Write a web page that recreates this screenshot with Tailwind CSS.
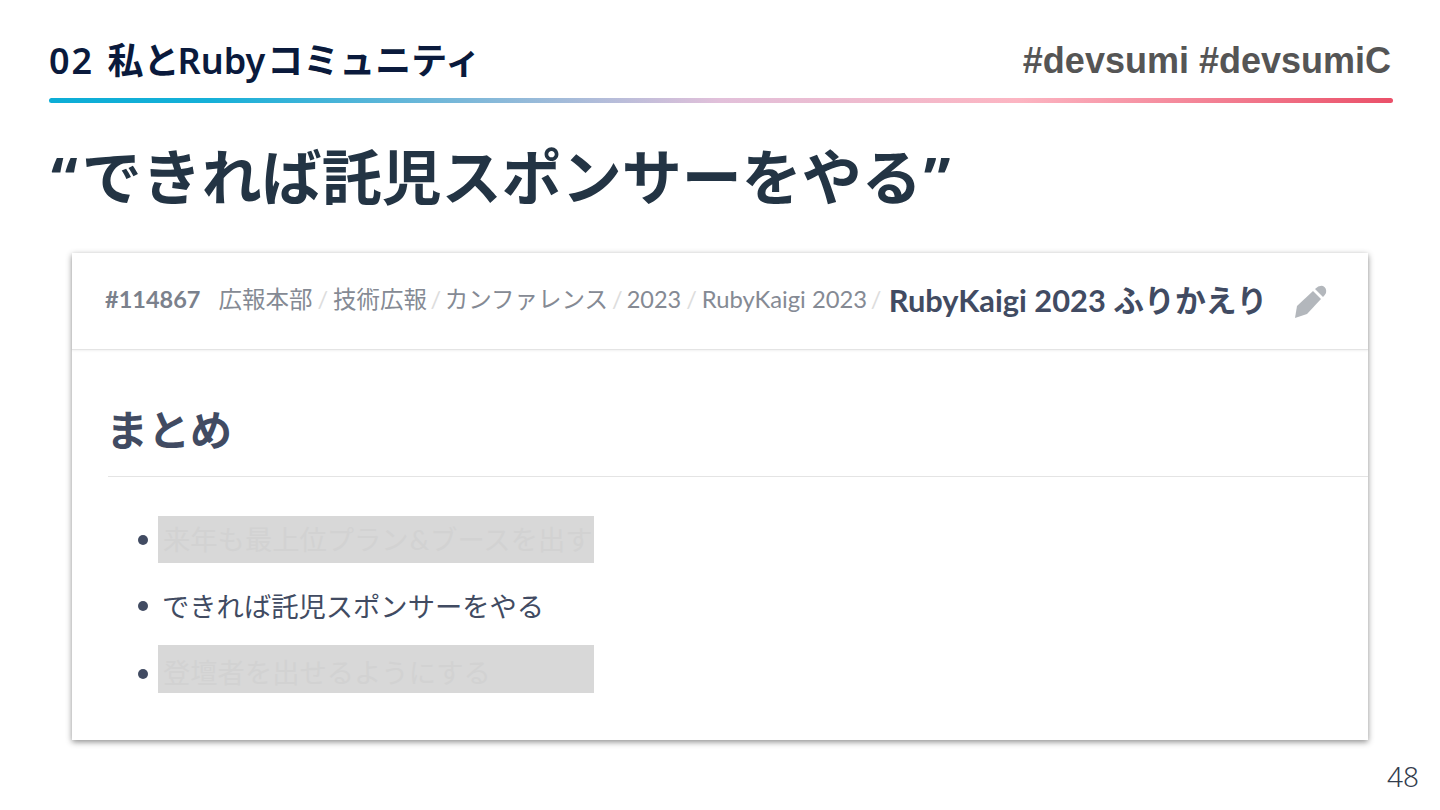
<!DOCTYPE html>
<html lang="ja">
<head>
    <meta charset="UTF-8">
    <title>02 私とRubyコミュニティ</title>
    <script src="https://cdn.jsdelivr.net/npm/@tailwindcss/browser@4"></script>
</head>
<body class="w-[1440px] h-[810px] overflow-hidden bg-white font-['Noto_Sans','Noto_Sans_CJK_JP',sans-serif]">
    <div class="relative h-full flex flex-col pt-[36px] pl-[49px] pr-[47px]">

        <!-- Slide header -->
        <div class="flex items-center justify-between h-[50px]">
            <div class="text-[36px] leading-[50px] font-semibold text-[#0a1a3c] [word-spacing:4px]"><span class="tracking-[2px]">02</span> 私と<span class="-ml-[2px]">Ruby</span><span class="ml-[2px]">コミュニティ</span></div>
            <div class="mr-[2px] text-[36px] leading-[50px] font-bold text-[#555555] font-['Liberation_Sans',sans-serif]">#devsumi #devsumiC</div>
        </div>
        <div class="mt-[12px] h-[5px] rounded-full bg-[linear-gradient(90deg,#0cadd6_0%,#15b0d8_12%,#e2c0da_50%,#fcb5c2_72%,#ea5069_100%)]"></div>

        <!-- Slide title -->
        <h1 class="mt-[39px] h-[70px] ml-[2px] text-[60px] leading-[70px] font-bold text-[#233444] whitespace-nowrap"><span class="mr-[4px]">“</span>できれば託児スポンサーをやる<span class="ml-[2px]">”</span></h1>

        <!-- Screenshot card -->
        <div class="mt-[41px] ml-[23px] w-[1296px] h-[487px] bg-white shadow-[0_2px_6px_rgba(0,0,0,0.45)] font-['Lato','Noto_Sans_CJK_JP',sans-serif]">
            <div class="flex items-center h-[97px] pb-[3px] pl-[33px] border-b border-[#e4e4e4] shadow-[0_1px_2px_rgba(0,0,0,0.06)] whitespace-nowrap">
                <span class="text-[23.5px] font-bold text-[#7b818c] mr-[18px]">#114867</span>
                <span class="text-[23.5px] text-[#858a94]">広報本部</span>
                <span class="text-[23.5px] text-[#dddddd] mx-[5px]">/</span>
                <span class="text-[23.5px] text-[#858a94]">技術広報</span>
                <span class="text-[23.5px] text-[#dddddd] mx-[3.5px]">/</span>
                <span class="text-[23.5px] text-[#858a94]">カンファレンス</span>
                <span class="text-[23.5px] text-[#dddddd] mx-[4px]">/</span>
                <span class="text-[23.5px] text-[#858a94]">2023</span>
                <span class="text-[23.5px] text-[#dddddd] mx-[5px]">/</span>
                <span class="text-[23.8px] text-[#858a94]">RubyKaigi 2023</span>
                <span class="text-[23.5px] text-[#dddddd] mx-[3.5px]">/</span>
                <span class="mt-[3px] text-[30.8px] font-bold text-[#414b62] ml-[4px]">RubyKaigi 2023 ふりかえり</span>
                <svg class="ml-[27px] mt-[3px] w-[33px] h-[33px]" viewBox="0 0 33 33" fill="#b3b7bc">
                    <path d="M1 33 L3 21 L19 6 L27 14 L13 29 Z"/>
                    <path d="M21 4 Q25 0 29 1 Q33 3 32 8 Q31 10 29 12 Z"/>
                </svg>
            </div>

            <div class="pl-[36px]">
                <h2 class="pt-[50px] h-[127px] text-[42px] leading-[60px] font-semibold text-[#414b62] border-b border-[#e4e4e4]"><span class="-ml-[2px]">まとめ</span></h2>
                <ul class="mt-[39px] flex flex-col pl-[30px] text-[27.3px] text-[#414b62]">
                    <li class="flex items-start h-[47px]">
                        <span class="mt-[19px] w-[10px] h-[10px] rounded-full bg-[#414b62] mr-[10px]"></span>
                        <span class="w-[436px] h-[47px] pl-[5px] leading-[47px] bg-[#d8d8d8] text-[#d2d2d2] whitespace-nowrap">来年も最上位プラン<span class="mx-[1px]">&amp;</span>ブースを出す</span>
                    </li>
                    <li class="flex items-start h-[47px] mt-[20px]">
                        <span class="mt-[18px] w-[10px] h-[10px] rounded-full bg-[#414b62] mr-[14px]"></span>
                        <span class="leading-[47px] whitespace-nowrap">できれば託児スポンサーをやる</span>
                    </li>
                    <li class="flex items-start h-[48px] mt-[15px]">
                        <span class="mt-[24px] w-[10px] h-[10px] rounded-full bg-[#414b62] mr-[10px]"></span>
                        <span class="w-[436px] h-[48px] pt-[4px] pl-[5px] leading-[47px] bg-[#d8d8d8] text-[#d2d2d2] whitespace-nowrap">登壇者を出せるようにする</span>
                    </li>
                </ul>
            </div>
        </div>

        <!-- Page number -->
        <div class="absolute right-[21px] bottom-[19px] text-[28px] leading-[30px] font-light text-[#333d4d]">48</div>
    </div>
</body>
</html>
